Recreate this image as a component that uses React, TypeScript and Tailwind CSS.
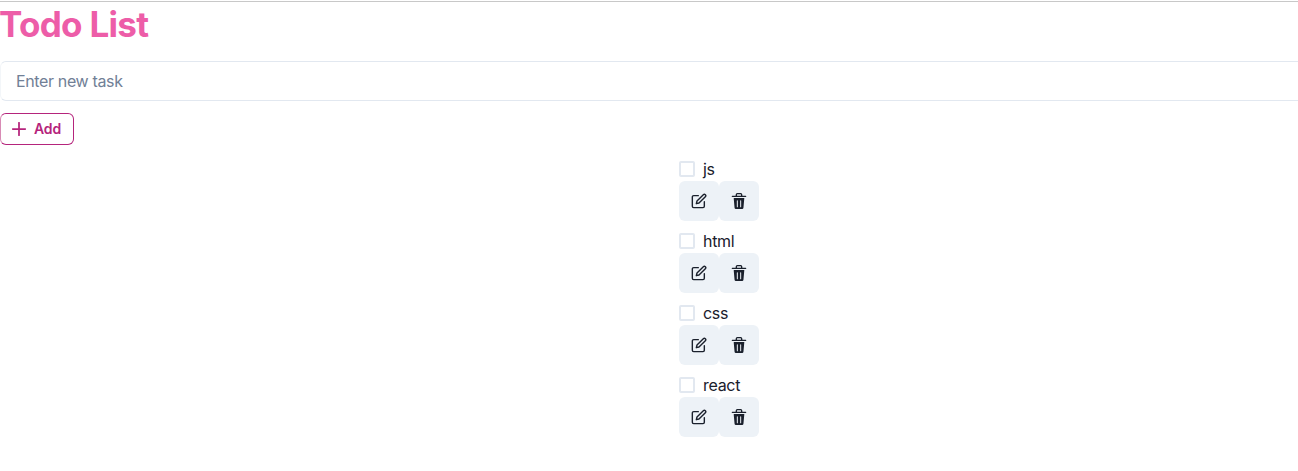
import { FiEdit } from "react-icons/fi";

const tasks = ["js", "html", "css", "react"];

function TrashIcon() {
  return (
    <svg viewBox="0 0 24 24" className="size-4" fill="currentColor">
      <path d="M19.452 7.5H4.547a.5.5,0,0,0-.5.545l1.287,14.136A2,2,0,0,0,7.326,24h9.347a2,2,0,0,0,1.992-1.819L19.95,8.045a.5.5,0,0,0-.129-.382A.5.5,0,0,0,19.452,7.5Zm-9.2,13a.75.75,0,0,1-1.5,0v-9a.75.75,0,0,1,1.5,0Zm5,0a.75.75,0,0,1-1.5,0v-9a.75.75,0,0,1,1.5,0Z" />
      <path d="M22,4H17.25A.25.25,0,0,1,17,3.75V2.5A2.5,2.5,0,0,0,14.5,0h-5A2.5,2.5,0,0,0,7,2.5V3.75A.25.25,0,0,1,6.75,4H2A1,1,0,0,0,2,6H22a1,1,0,0,0,0-2ZM9,3.75V2.5A.5.5,0,0,1,9.5,2h5a.5.5,0,0,1,.5.5V3.75a.25.25,0,0,1-.25.25H9.25A.25.25,0,0,1,9,3.75Z" />
    </svg>
  );
}

function Task({ name }: { name: string }) {
  return (
    <li>
      <label className="flex h-6 items-center">
        <input type="checkbox" className="size-4 appearance-none rounded-xs border-2 border-[#e2e8f0]" />
        <span className="ml-2 tracking-[-0.3px]">{name}</span>
      </label>
      <div className="flex">
        <button aria-label="Edit" className="flex size-10 items-center justify-center rounded-md bg-[#edf2f7]">
          <FiEdit className="size-4 stroke-[2.1]" />
        </button>
        <button aria-label="Delete" className="flex size-10 items-center justify-center rounded-md bg-[#edf2f7]">
          <TrashIcon />
        </button>
      </div>
    </li>
  );
}

export default function App() {
  return (
    <main className="h-[471px] overflow-hidden border-t border-transparent bg-white font-['Inter','Liberation_Sans',sans-serif] text-base text-[#1a202c]">
      <div className="border-t border-[#c8c8c8]">
        <h1 className="-ml-px mt-px h-[43px] text-[35px] leading-[42px] font-bold tracking-[-0.7px] text-[#ed5da8]">Todo List</h1>
        <input
          placeholder="Enter new task"
          className="mt-[15px] block h-10 w-[1310px] rounded-md border border-[#e2e8f0] border-l-[#f3f6f9] px-[15px] tracking-[-0.36px] placeholder:text-[#718096]"
        />
        <button className="mt-3 flex h-8 w-[74px] items-center rounded-md border border-[#b5247c] border-l-[#d88bb5] pl-[11px] text-sm font-semibold tracking-[-0.1px] text-[#b5247c]">
          <svg viewBox="0 0 14 14" className="mr-2 size-3.5" fill="none" stroke="currentColor" strokeWidth="1.75" strokeLinecap="round">
            <path d="M7 .75v12.5M.75 7h12.5" />
          </svg>
          Add
        </button>
        <ul className="mt-3 ml-[679px] flex flex-col gap-2">
          {tasks.map((name) => (
            <Task key={name} name={name} />
          ))}
        </ul>
      </div>
    </main>
  );
}
